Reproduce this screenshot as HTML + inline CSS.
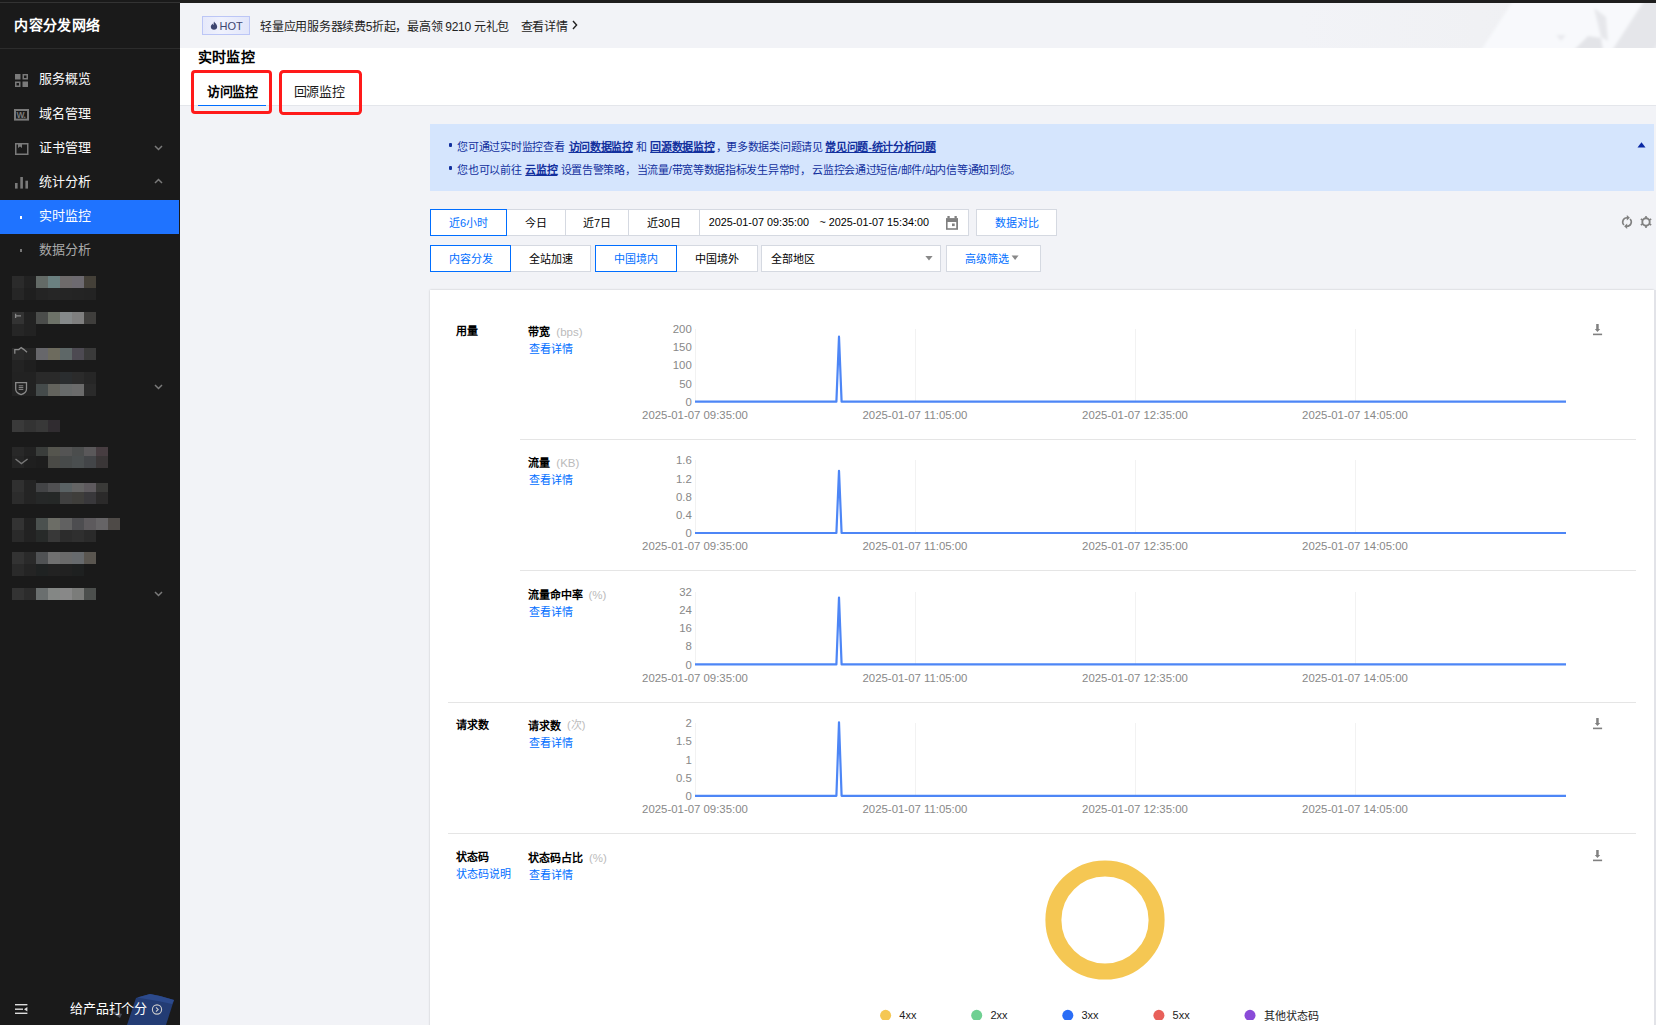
<!DOCTYPE html>
<html lang="zh-CN"><head><meta charset="utf-8"><style>
html,body{margin:0;padding:0;}
body{width:1656px;height:1025px;position:relative;overflow:hidden;font-family:"Liberation Sans",sans-serif;}
.t{position:absolute;line-height:30px;white-space:nowrap;}
.b{position:absolute;}
</style></head><body>
<div class="b" style="left:0px;top:0px;width:1656px;height:1025px;background:#f2f3f7"></div>
<div class="b" style="left:0px;top:0px;width:180px;height:1025px;background:#1a1a1a"></div>
<div class="b" style="left:0px;top:2px;width:180px;height:1px;background:#333"></div>
<div class="t" style="left:14.3px;top:10.1px;font-size:14px;color:#fff;font-weight:700;letter-spacing:0.4px;">内容分发网络</div>
<div class="b" style="left:0px;top:48px;width:180px;height:1px;background:#2c2c2c"></div>
<div class="t" style="left:39.0px;top:64.3px;font-size:13px;color:#fafafa;font-weight:500;">服务概览</div>
<div class="t" style="left:39.0px;top:99.3px;font-size:13px;color:#fafafa;font-weight:500;">域名管理</div>
<div class="t" style="left:39.0px;top:133.0px;font-size:13px;color:#fafafa;font-weight:500;">证书管理</div>
<div class="t" style="left:39.0px;top:167.3px;font-size:13px;color:#fafafa;font-weight:500;">统计分析</div>
<div class="b" style="left:0px;top:200px;width:179px;height:34px;background:#1f73ff"></div>
<div class="t" style="left:39.0px;top:201.0px;font-size:13px;color:#fff;font-weight:500;">实时监控</div>
<div class="t" style="left:39.0px;top:235.0px;font-size:13px;color:#aaa;font-weight:500;">数据分析</div>
<div class="b" style="left:20px;top:216px;width:2px;height:3px;background:#fff"></div>
<div class="b" style="left:20px;top:249px;width:2px;height:3px;background:#777"></div>
<svg class="b" style="left:0;top:0" width="180" height="1025" viewBox="0 0 180 1025">
<g fill="#7a7a7a">
 <rect x="15" y="74" width="5.5" height="5.5"/>
 <rect x="22.5" y="81.5" width="5.5" height="5.5"/>
</g>
<g fill="none" stroke="#7a7a7a" stroke-width="1.5">
 <rect x="23.25" y="74.75" width="4" height="4"/>
 <rect x="15.75" y="82.25" width="4" height="4"/>
 <rect x="15.75" y="143.75" width="12" height="10.5"/>
 <path d="M155 146 L158.5 149.5 L162 146"/>
 <path d="M155 183 L158.5 179.5 L162 183"/>
 <path d="M155 385 L158.5 388.5 L162 385"/>
 <path d="M155 592 L158.5 595.5 L162 592"/>
</g>
<path d="M18 144 L18 148 L20 146.5 L22 148 L22 144" fill="#7a7a7a"/>
<rect x="15" y="110" width="13" height="9.6" fill="none" stroke="#7a7a7a" stroke-width="2"/><text x="16.6" y="118.4" font-family="Liberation Sans" font-size="8.5" font-weight="bold" fill="#7a7a7a" letter-spacing="-0.6">W.</text>
<g fill="#7a7a7a">
 <rect x="15" y="183" width="2.6" height="5.6"/>
 <rect x="20.3" y="177" width="2.6" height="11.6"/>
 <rect x="25.4" y="180.7" width="2.6" height="7.9"/>
</g>
</svg>
<div class="b" style="left:12px;top:276px;width:12px;height:12px;background:#2b2b2b"></div>
<div class="b" style="left:24px;top:276px;width:12px;height:12px;background:#222"></div>
<div class="b" style="left:36px;top:276px;width:12px;height:12px;background:#636a66"></div>
<div class="b" style="left:48px;top:276px;width:12px;height:12px;background:#6b8080"></div>
<div class="b" style="left:60px;top:276px;width:12px;height:12px;background:#6e6b6b"></div>
<div class="b" style="left:72px;top:276px;width:12px;height:12px;background:#6d6a70"></div>
<div class="b" style="left:84px;top:276px;width:12px;height:12px;background:#444038"></div>
<div class="b" style="left:12px;top:288px;width:12px;height:12px;background:#262626"></div>
<div class="b" style="left:24px;top:288px;width:12px;height:12px;background:#1f1f1f"></div>
<div class="b" style="left:36px;top:288px;width:12px;height:12px;background:#242424"></div>
<div class="b" style="left:48px;top:288px;width:12px;height:12px;background:#262626"></div>
<div class="b" style="left:60px;top:288px;width:12px;height:12px;background:#252525"></div>
<div class="b" style="left:72px;top:288px;width:12px;height:12px;background:#242424"></div>
<div class="b" style="left:84px;top:288px;width:12px;height:12px;background:#232323"></div>
<div class="b" style="left:12px;top:312px;width:12px;height:12px;background:#333"></div>
<div class="b" style="left:24px;top:312px;width:12px;height:12px;background:#222"></div>
<div class="b" style="left:36px;top:312px;width:12px;height:12px;background:#4b4d4b"></div>
<div class="b" style="left:48px;top:312px;width:12px;height:12px;background:#6d7268"></div>
<div class="b" style="left:60px;top:312px;width:12px;height:12px;background:#85898a"></div>
<div class="b" style="left:72px;top:312px;width:12px;height:12px;background:#7f7f7f"></div>
<div class="b" style="left:84px;top:312px;width:12px;height:12px;background:#3f3e3c"></div>
<div class="b" style="left:12px;top:324px;width:12px;height:12px;background:#262626"></div>
<div class="b" style="left:24px;top:324px;width:12px;height:12px;background:#222"></div>
<div class="b" style="left:12px;top:348px;width:12px;height:12px;background:#2a2a2a"></div>
<div class="b" style="left:24px;top:348px;width:12px;height:12px;background:#262626"></div>
<div class="b" style="left:36px;top:348px;width:12px;height:12px;background:#67676b"></div>
<div class="b" style="left:48px;top:348px;width:12px;height:12px;background:#6d6b5e"></div>
<div class="b" style="left:60px;top:348px;width:12px;height:12px;background:#5e6767"></div>
<div class="b" style="left:72px;top:348px;width:12px;height:12px;background:#4d4a52"></div>
<div class="b" style="left:84px;top:348px;width:12px;height:12px;background:#3a3a3a"></div>
<div class="b" style="left:12px;top:360px;width:12px;height:12px;background:#232323"></div>
<div class="b" style="left:24px;top:360px;width:12px;height:12px;background:#1f1f1f"></div>
<div class="b" style="left:12px;top:372px;width:12px;height:12px;background:#222"></div>
<div class="b" style="left:24px;top:372px;width:12px;height:12px;background:#222"></div>
<div class="b" style="left:36px;top:372px;width:12px;height:12px;background:#2a2a2a"></div>
<div class="b" style="left:48px;top:372px;width:12px;height:12px;background:#2a2a2a"></div>
<div class="b" style="left:60px;top:372px;width:12px;height:12px;background:#2a2d2f"></div>
<div class="b" style="left:72px;top:372px;width:12px;height:12px;background:#2b2b2b"></div>
<div class="b" style="left:84px;top:372px;width:12px;height:12px;background:#262626"></div>
<div class="b" style="left:12px;top:384px;width:12px;height:12px;background:#222"></div>
<div class="b" style="left:24px;top:384px;width:12px;height:12px;background:#222"></div>
<div class="b" style="left:36px;top:384px;width:12px;height:12px;background:#454b4b"></div>
<div class="b" style="left:48px;top:384px;width:12px;height:12px;background:#63635d"></div>
<div class="b" style="left:60px;top:384px;width:12px;height:12px;background:#676a6a"></div>
<div class="b" style="left:72px;top:384px;width:12px;height:12px;background:#6b6b6b"></div>
<div class="b" style="left:84px;top:384px;width:12px;height:12px;background:#2a2a2a"></div>
<div class="b" style="left:12px;top:420px;width:12px;height:12px;background:#3a3a3a"></div>
<div class="b" style="left:24px;top:420px;width:12px;height:12px;background:#333"></div>
<div class="b" style="left:36px;top:420px;width:12px;height:12px;background:#383838"></div>
<div class="b" style="left:48px;top:420px;width:12px;height:12px;background:#302c30"></div>
<div class="b" style="left:12px;top:447px;width:12px;height:9px;background:#282828"></div>
<div class="b" style="left:24px;top:447px;width:12px;height:9px;background:#222"></div>
<div class="b" style="left:36px;top:447px;width:12px;height:9px;background:#3a3d3b"></div>
<div class="b" style="left:48px;top:447px;width:12px;height:9px;background:#55554e"></div>
<div class="b" style="left:60px;top:447px;width:12px;height:9px;background:#545454"></div>
<div class="b" style="left:72px;top:447px;width:12px;height:9px;background:#4b4d4d"></div>
<div class="b" style="left:84px;top:447px;width:12px;height:9px;background:#5a585a"></div>
<div class="b" style="left:96px;top:447px;width:12px;height:9px;background:#473d41"></div>
<div class="b" style="left:12px;top:456px;width:12px;height:12px;background:#252525"></div>
<div class="b" style="left:24px;top:456px;width:12px;height:12px;background:#1f1f1f"></div>
<div class="b" style="left:36px;top:456px;width:12px;height:12px;background:#1d1d1d"></div>
<div class="b" style="left:48px;top:456px;width:12px;height:12px;background:#4a4a46"></div>
<div class="b" style="left:60px;top:456px;width:12px;height:12px;background:#474a4a"></div>
<div class="b" style="left:72px;top:456px;width:12px;height:12px;background:#4a4e4f"></div>
<div class="b" style="left:84px;top:456px;width:12px;height:12px;background:#434548"></div>
<div class="b" style="left:96px;top:456px;width:12px;height:12px;background:#3a3637"></div>
<div class="b" style="left:12px;top:480px;width:12px;height:12px;background:#303030"></div>
<div class="b" style="left:24px;top:480px;width:12px;height:12px;background:#242424"></div>
<div class="b" style="left:12px;top:492px;width:12px;height:12px;background:#2c2c2c"></div>
<div class="b" style="left:24px;top:492px;width:12px;height:12px;background:#242424"></div>
<div class="b" style="left:36px;top:483px;width:12px;height:9px;background:#434446"></div>
<div class="b" style="left:48px;top:483px;width:12px;height:9px;background:#505052"></div>
<div class="b" style="left:60px;top:483px;width:12px;height:9px;background:#5a6264"></div>
<div class="b" style="left:72px;top:483px;width:12px;height:9px;background:#646464"></div>
<div class="b" style="left:84px;top:483px;width:12px;height:9px;background:#5e5a5e"></div>
<div class="b" style="left:96px;top:483px;width:12px;height:9px;background:#3a3a38"></div>
<div class="b" style="left:36px;top:492px;width:12px;height:12px;background:#262828"></div>
<div class="b" style="left:48px;top:492px;width:12px;height:12px;background:#252827"></div>
<div class="b" style="left:60px;top:492px;width:12px;height:12px;background:#404040"></div>
<div class="b" style="left:72px;top:492px;width:12px;height:12px;background:#3f3e3b"></div>
<div class="b" style="left:84px;top:492px;width:12px;height:12px;background:#39383b"></div>
<div class="b" style="left:96px;top:492px;width:12px;height:12px;background:#2b2a2a"></div>
<svg class="b" style="left:10px;top:455px" width="22" height="14" viewBox="10 455 22 14"><path d="M15.5 459 L21.4 463.6 L27.6 459" fill="none" stroke="#777" stroke-width="1.4"/></svg>
<div class="b" style="left:12px;top:518px;width:12px;height:12px;background:#333"></div>
<div class="b" style="left:24px;top:518px;width:12px;height:12px;background:#222"></div>
<div class="b" style="left:36px;top:518px;width:12px;height:12px;background:#4b514f"></div>
<div class="b" style="left:48px;top:518px;width:12px;height:12px;background:#6c6d66"></div>
<div class="b" style="left:60px;top:518px;width:12px;height:12px;background:#616161"></div>
<div class="b" style="left:72px;top:518px;width:12px;height:12px;background:#4d4d50"></div>
<div class="b" style="left:84px;top:518px;width:12px;height:12px;background:#5d5a5d"></div>
<div class="b" style="left:96px;top:518px;width:12px;height:12px;background:#666466"></div>
<div class="b" style="left:108px;top:518px;width:12px;height:12px;background:#4e4a47"></div>
<div class="b" style="left:12px;top:530px;width:12px;height:12px;background:#2a2a2a"></div>
<div class="b" style="left:24px;top:530px;width:12px;height:12px;background:#222"></div>
<div class="b" style="left:36px;top:530px;width:12px;height:12px;background:#272a29"></div>
<div class="b" style="left:48px;top:530px;width:12px;height:12px;background:#383838"></div>
<div class="b" style="left:60px;top:530px;width:12px;height:12px;background:#2c2c2c"></div>
<div class="b" style="left:72px;top:530px;width:12px;height:12px;background:#2f2f2f"></div>
<div class="b" style="left:84px;top:530px;width:12px;height:12px;background:#2a2a2a"></div>
<div class="b" style="left:12px;top:552px;width:12px;height:12px;background:#333"></div>
<div class="b" style="left:24px;top:552px;width:12px;height:12px;background:#2a2a2a"></div>
<div class="b" style="left:36px;top:552px;width:12px;height:12px;background:#505254"></div>
<div class="b" style="left:48px;top:552px;width:12px;height:12px;background:#707070"></div>
<div class="b" style="left:60px;top:552px;width:12px;height:12px;background:#6a6a6a"></div>
<div class="b" style="left:72px;top:552px;width:12px;height:12px;background:#676a6d"></div>
<div class="b" style="left:84px;top:552px;width:12px;height:12px;background:#5a5650"></div>
<div class="b" style="left:12px;top:564px;width:12px;height:12px;background:#2a2a2a"></div>
<div class="b" style="left:24px;top:564px;width:12px;height:12px;background:#242424"></div>
<div class="b" style="left:36px;top:564px;width:12px;height:12px;background:#1f2222"></div>
<div class="b" style="left:48px;top:564px;width:12px;height:12px;background:#222"></div>
<div class="b" style="left:60px;top:564px;width:12px;height:12px;background:#212121"></div>
<div class="b" style="left:72px;top:564px;width:12px;height:12px;background:#1e2020"></div>
<div class="b" style="left:12px;top:588px;width:12px;height:12px;background:#333"></div>
<div class="b" style="left:24px;top:588px;width:12px;height:12px;background:#2c2c2c"></div>
<div class="b" style="left:36px;top:588px;width:12px;height:12px;background:#6a6f6f"></div>
<div class="b" style="left:48px;top:588px;width:12px;height:12px;background:#848785"></div>
<div class="b" style="left:60px;top:588px;width:12px;height:12px;background:#888888"></div>
<div class="b" style="left:72px;top:588px;width:12px;height:12px;background:#7b7c7a"></div>
<div class="b" style="left:84px;top:588px;width:12px;height:12px;background:#4c4f4d"></div>
<svg class="b" style="left:0;top:300px" width="40" height="100" viewBox="0 300 40 100">
<g fill="none" stroke="#8a8a8a" stroke-width="1.3">
<path d="M15.6 313.8 L15.6 318 M15.6 315.9 L21 315.9"/>
<path d="M14.8 353.8 L14.8 349.6 L18.8 349.6 L21.2 347.6 L24 349.6 L27 352.2"/>
<path d="M15.7 382.6 L26.5 382.6 L26.5 389 Q26.5 393 21.1 394.6 Q15.7 393 15.7 389 Z"/>
<path d="M18.7 385.8 L23.3 385.8 M18.7 387.6 L23.3 387.6 M18.7 389.4 L23.3 389.4" stroke-width="1"/>
</g>
</svg>
<svg class="b" style="left:0;top:985px" width="180" height="40" viewBox="0 985 180 40">
<path d="M127 1025 L136 998 L150 994 L160 996 L174 1000 L166 1025 Z" fill="#233c74"/>
<path d="M137 997.5 L150 994 L160 996 L174 1000 L172 1004 L158 1001 Z" fill="#2c4a8c"/>
<path d="M108 1010 L122 1014 L120 1018 Z" fill="#4a4f5a"/>
<g fill="#ddd">
 <rect x="15" y="1004" width="12.4" height="1.4"/>
 <rect x="15" y="1008.5" width="8" height="1.4"/>
 <rect x="15" y="1012.6" width="12.4" height="1.4"/>
 <path d="M24 1009.2 L27.4 1007 L27.4 1011.4 Z"/>
</g>
<circle cx="157" cy="1009.5" r="4.6" fill="none" stroke="#ccc" stroke-width="1.1"/>
<path d="M156 1007.3 L158.2 1009.5 L156 1011.7" fill="none" stroke="#ccc" stroke-width="1.1"/>
</svg>
<div class="t" style="left:70.4px;top:994.0px;font-size:13px;color:#fff;font-weight:500;letter-spacing:-0.25px;">给产品打个分</div>
<div class="b" style="left:180px;top:0px;width:1476px;height:3px;background:#1e1e1e"></div>
<div class="b" style="left:0px;top:0px;width:180px;height:2px;background:#1a1a1a"></div>
<svg class="b" style="left:1300px;top:3px" width="356" height="45" viewBox="1300 3 356 45">
<defs><linearGradient id="bg1" x1="0" x2="1"><stop offset="0" stop-color="#f2f3f7"/><stop offset="0.5" stop-color="#f0f1f4"/><stop offset="1" stop-color="#eeeff3"/></linearGradient>
<filter id="bl" x="-10%" y="-50%" width="120%" height="200%"><feGaussianBlur stdDeviation="1.6"/></filter>
<clipPath id="bc"><rect x="1300" y="3" width="356" height="45"/></clipPath></defs>
<rect x="1300" y="3" width="356" height="45" fill="url(#bg1)"/>
<g clip-path="url(#bc)"><g filter="url(#bl)">
<path d="M1480 52 L1515 -2 L1660 -2 L1660 52 Z" fill="#f8f9fc"/>
<path d="M1611 52 L1646 -2 L1660 -2 L1660 52 Z" fill="#e5e6ea"/>
<path d="M1652 52 L1660 40 L1660 52 Z" fill="#eeeff2"/>
<path d="M1574 50 L1588 36 L1601 38 L1603 50 Z" fill="#e3e4e8"/>
<path d="M1594 8 L1606 17 L1608 41 L1601 37 Z" fill="#e6e7eb"/>
<path d="M1556 35 L1566 35 L1561 41 Z" fill="#e9eaee"/>
</g></g>
</svg>
<div class="b" style="left:202px;top:16px;width:46px;height:17px;border:1px solid #bcc6f6;background:linear-gradient(90deg,#e6e9fb,#f0f2fd 40%,#e2e6fa)"></div>
<svg class="b" style="left:209.7px;top:20px" width="8" height="11" viewBox="0 0 8 11"><path d="M4 1.5 C5 3 7.2 4.5 7.2 6.8 C7.2 8.6 5.8 9.8 4 9.8 C2.2 9.8 0.8 8.6 0.8 6.8 C0.8 5.2 2 4.6 2.6 3.6 C2.8 4.6 3.2 5 3.6 5 C3.6 3.8 3.6 2.6 4 1.5 Z" fill="#3e4670"/></svg>
<div class="t" style="left:219.5px;top:10.5px;font-size:11px;color:#3e4670;font-weight:500;">HOT</div>
<div class="t" style="left:260.4px;top:11.9px;font-size:12px;color:#222;font-weight:500;letter-spacing:-0.3px;">轻量应用服务器续费5折起，最高领 9210 元礼包</div>
<div class="t" style="left:520.7px;top:11.9px;font-size:12px;color:#222;font-weight:500;letter-spacing:-0.3px;">查看详情</div>
<svg class="b" style="left:570px;top:19px" width="10" height="12" viewBox="0 0 10 12"><path d="M3 2 L6.6 6 L3 10" fill="none" stroke="#222" stroke-width="1.4"/></svg>
<div class="b" style="left:180px;top:48px;width:1476px;height:57px;background:#fff"></div>
<div class="b" style="left:180px;top:105px;width:1476px;height:1px;background:#e4e6eb"></div>
<div class="t" style="left:197.9px;top:41.5px;font-size:14px;color:#000;font-weight:700;letter-spacing:0.3px;">实时监控</div>
<div class="t" style="left:207.1px;top:77.0px;font-size:13px;color:#000;font-weight:700;letter-spacing:-0.4px;">访问监控</div>
<div class="b" style="left:198px;top:104.6px;width:68px;height:1.6px;background:#006eff"></div>
<div class="t" style="left:293.7px;top:77.0px;font-size:13px;color:#1a1a1a;font-weight:500;letter-spacing:-0.2px;">回源监控</div>
<div class="b" style="left:191.4px;top:70.2px;width:74.7px;height:37.6px;border:3.2px solid #ff1a1a;border-radius:4px"></div>
<div class="b" style="left:278.6px;top:69.5px;width:77.5px;height:39.5px;border:3.2px solid #ff1a1a;border-radius:4.5px"></div>
<div class="b" style="left:430px;top:124px;width:1224px;height:67px;background:#d5e5fd"></div>
<div class="b" style="left:449px;top:143px;width:3px;height:4px;background:#12309e;border-radius:1px"></div>
<div class="b" style="left:449px;top:166px;width:3px;height:4px;background:#12309e;border-radius:1px"></div>
<div class="t" style="left:457.4px;top:131.8px;font-size:11px;color:#12309e;font-weight:500;letter-spacing:-0.3px;">您可通过实时监控查看</div>
<div class="t" style="left:568.5px;top:131.8px;font-size:11px;color:#12309e;font-weight:500;letter-spacing:-0.3px;text-decoration:underline;font-weight:700;">访问数据监控</div>
<div class="t" style="left:636.3px;top:131.8px;font-size:11px;color:#12309e;font-weight:500;letter-spacing:-0.3px;">和</div>
<div class="t" style="left:650.2px;top:131.8px;font-size:11px;color:#12309e;font-weight:500;letter-spacing:-0.3px;text-decoration:underline;font-weight:700;">回源数据监控</div>
<div class="t" style="left:715.7px;top:131.8px;font-size:11px;color:#12309e;font-weight:500;letter-spacing:-0.3px;">，更多数据类问题请见</div>
<div class="t" style="left:825.4px;top:131.8px;font-size:11px;color:#12309e;font-weight:500;letter-spacing:-0.3px;text-decoration:underline;font-weight:700;">常见问题-统计分析问题</div>
<div class="t" style="left:457.4px;top:154.8px;font-size:11px;color:#12309e;font-weight:500;letter-spacing:-0.3px;">您也可以前往</div>
<div class="t" style="left:525.3px;top:154.8px;font-size:11px;color:#12309e;font-weight:500;letter-spacing:-0.3px;text-decoration:underline;font-weight:700;">云监控</div>
<div class="t" style="left:560.7px;top:154.8px;font-size:11px;color:#12309e;font-weight:500;letter-spacing:-0.3px;">设置告警策略，</div>
<div class="t" style="left:636.7px;top:154.8px;font-size:11px;color:#12309e;font-weight:500;letter-spacing:-0.3px;">当流量/带宽等数据指标发生异常时，</div>
<div class="t" style="left:812.2px;top:154.8px;font-size:11px;color:#12309e;font-weight:500;letter-spacing:-0.3px;">云监控会通过短信/邮件/站内信等通知到您。</div>
<svg class="b" style="left:1634.5px;top:139.3px" width="12" height="10" viewBox="0 0 12 10"><path d="M2.5 8.4 L6.5 3.3 L10.5 8.4 Z" fill="#0a28a4"/></svg>
<div class="b" style="left:506px;top:209px;width:60px;height:27px;box-sizing:border-box;border:1px solid #d5d9e1;background:#fff;"></div>
<div class="t" style="left:506.0px;top:207.8px;width:60px;text-align:center;font-size:11px;color:#000;font-weight:500;">今日</div>
<div class="b" style="left:565px;top:209px;width:64px;height:27px;box-sizing:border-box;border:1px solid #d5d9e1;background:#fff;"></div>
<div class="t" style="left:565.0px;top:207.8px;width:64px;text-align:center;font-size:11px;color:#000;font-weight:500;">近7日</div>
<div class="b" style="left:628px;top:209px;width:72px;height:27px;box-sizing:border-box;border:1px solid #d5d9e1;background:#fff;"></div>
<div class="t" style="left:628.0px;top:207.8px;width:72px;text-align:center;font-size:11px;color:#000;font-weight:500;">近30日</div>
<div class="b" style="left:699px;top:209px;width:270px;height:27px;box-sizing:border-box;border:1px solid #d5d9e1;background:#fff;"></div>
<div class="b" style="left:430px;top:209px;width:77px;height:27px;box-sizing:border-box;border:1px solid #006eff;background:#fff;z-index:2;"></div>
<div class="t" style="left:430.0px;top:207.8px;width:77px;text-align:center;font-size:11px;color:#006eff;font-weight:500;z-index:2;">近6小时</div>
<div class="t" style="left:708.7px;top:207.0px;font-size:10.8px;color:#000;font-weight:500;">2025-01-07 09:35:00</div>
<div class="t" style="left:819.5px;top:207.0px;font-size:10.8px;color:#000;font-weight:500;">~ 2025-01-07 15:34:00</div>
<svg class="b" style="left:940px;top:210px" width="24" height="24" viewBox="940 210 24 24"><rect x="946" y="218.1" width="12" height="11.7" fill="#808080"/><rect x="947.6" y="222" width="8.6" height="6.2" fill="#fff"/><rect x="952" y="223.5" width="2.7" height="2.6" fill="#808080"/><rect x="947.4" y="216" width="2.3" height="2.5" fill="#808080"/><rect x="954.5" y="216" width="2.3" height="2.5" fill="#808080"/></svg>
<div class="b" style="left:976px;top:209px;width:81px;height:27px;box-sizing:border-box;border:1px solid #d5d9e1;background:#fff;"></div>
<div class="t" style="left:976.0px;top:207.8px;width:81px;text-align:center;font-size:11px;color:#006eff;font-weight:500;">数据对比</div>
<div class="b" style="left:510px;top:245px;width:81px;height:27px;box-sizing:border-box;border:1px solid #d5d9e1;background:#fff;"></div>
<div class="t" style="left:510.0px;top:243.8px;width:81px;text-align:center;font-size:11px;color:#000;font-weight:500;">全站加速</div>
<div class="b" style="left:430px;top:245px;width:81px;height:27px;box-sizing:border-box;border:1px solid #006eff;background:#fff;z-index:2;"></div>
<div class="t" style="left:430.0px;top:243.8px;width:81px;text-align:center;font-size:11px;color:#006eff;font-weight:500;z-index:2;">内容分发</div>
<div class="b" style="left:676px;top:245px;width:82px;height:27px;box-sizing:border-box;border:1px solid #d5d9e1;background:#fff;"></div>
<div class="t" style="left:676.0px;top:243.8px;width:82px;text-align:center;font-size:11px;color:#000;font-weight:500;">中国境外</div>
<div class="b" style="left:595px;top:245px;width:82px;height:27px;box-sizing:border-box;border:1px solid #006eff;background:#fff;z-index:2;"></div>
<div class="t" style="left:595.0px;top:243.8px;width:82px;text-align:center;font-size:11px;color:#006eff;font-weight:500;z-index:2;">中国境内</div>
<div class="b" style="left:761px;top:245px;width:180px;height:27px;box-sizing:border-box;border:1px solid #d5d9e1;background:#fff;"></div>
<div class="t" style="left:771.1px;top:243.8px;font-size:11px;color:#000;font-weight:500;">全部地区</div>
<svg class="b" style="left:922px;top:253px" width="14" height="10" viewBox="0 0 14 10"><path d="M3.4 3 L10.6 3 L7 7.4 Z" fill="#888"/></svg>
<div class="b" style="left:946px;top:245px;width:95px;height:27px;box-sizing:border-box;border:1px solid #d5d9e1;background:#fff;"></div>
<div class="t" style="left:964.7px;top:243.8px;font-size:11px;color:#006eff;font-weight:500;">高级筛选</div>
<svg class="b" style="left:1008px;top:253px" width="14" height="10" viewBox="0 0 14 10"><path d="M3.6 2.6 L10.6 2.6 L7.1 7 Z" fill="#888"/></svg>
<svg class="b" style="left:1616px;top:211px" width="40" height="22" viewBox="1616 211 40 22">
<g fill="none" stroke="#808080" stroke-width="1.6">
<path d="M1623.96 225.04 A4.3 4.3 0 0 1 1627 217.7"/>
<path d="M1630.04 218.96 A4.3 4.3 0 0 1 1627 226.3"/>
</g>
<path d="M1626.8 215 L1629.9 217.7 L1626.8 220.4 Z" fill="#808080"/>
<path d="M1627.2 223.6 L1624.1 226.3 L1627.2 229 Z" fill="#808080"/>
<circle cx="1646" cy="222" r="3.7" fill="none" stroke="#808080" stroke-width="1.9"/>
<g stroke="#808080" stroke-width="1.6">
<path d="M1646 216 L1646 218.2 M1646 225.8 L1646 228 M1640.8 219 L1642.7 220.1 M1649.3 223.9 L1651.2 225 M1640.8 225 L1642.7 223.9 M1649.3 220.1 L1651.2 219"/>
</g>
</svg>
<div class="b" style="left:430px;top:290px;width:1224px;height:740px;background:#fff;box-shadow:0 0 2px rgba(0,0,0,0.2)"></div>
<div class="b" style="left:1654px;top:290px;width:2px;height:735px;background:#e2e3e8"></div>
<div class="b" style="left:695px;top:329px;width:1px;height:72px;background:#f2f2f2"></div>
<div class="b" style="left:915px;top:329px;width:1px;height:72px;background:#f2f2f2"></div>
<div class="b" style="left:1135px;top:329px;width:1px;height:72px;background:#f2f2f2"></div>
<div class="b" style="left:1355px;top:329px;width:1px;height:72px;background:#f2f2f2"></div>
<div class="t" style="left:591.8px;top:386.8px;width:100px;text-align:right;font-size:11.4px;color:#888888;">0</div>
<div class="t" style="left:591.8px;top:368.6px;width:100px;text-align:right;font-size:11.4px;color:#888888;">50</div>
<div class="t" style="left:591.8px;top:350.4px;width:100px;text-align:right;font-size:11.4px;color:#888888;">100</div>
<div class="t" style="left:591.8px;top:332.2px;width:100px;text-align:right;font-size:11.4px;color:#888888;">150</div>
<div class="t" style="left:591.8px;top:314.0px;width:100px;text-align:right;font-size:11.4px;color:#888888;">200</div>
<div class="t" style="left:595.0px;top:400.0px;width:200px;text-align:center;font-size:11.4px;color:#888888;font-weight:500;">2025-01-07 09:35:00</div>
<div class="t" style="left:815.0px;top:400.0px;width:200px;text-align:center;font-size:11.4px;color:#888888;font-weight:500;">2025-01-07 11:05:00</div>
<div class="t" style="left:1035.0px;top:400.0px;width:200px;text-align:center;font-size:11.4px;color:#888888;font-weight:500;">2025-01-07 12:35:00</div>
<div class="t" style="left:1255.0px;top:400.0px;width:200px;text-align:center;font-size:11.4px;color:#888888;font-weight:500;">2025-01-07 14:05:00</div>
<svg class="b" style="left:690px;top:321px" width="890" height="90" viewBox="690 321 890 90"><path d="M695 401.6 L836.4 401.6 L839 336.7 L841.6 401.6 L1566 401.6" fill="none" stroke="#4d86f6" stroke-width="2.2" stroke-linejoin="round"/></svg>
<div class="t" style="left:528.3px;top:316.8px;font-size:11px;color:#000;font-weight:700;">带宽</div>
<div class="t" style="left:528.5px;top:333.8px;font-size:11px;color:#006eff;font-weight:500;">查看详情</div>
<div class="t" style="left:556.3px;top:316.5px;font-size:11.5px;color:#bbb;font-weight:500;">(bps)</div>
<div class="b" style="left:695px;top:460px;width:1px;height:72px;background:#f2f2f2"></div>
<div class="b" style="left:915px;top:460px;width:1px;height:72px;background:#f2f2f2"></div>
<div class="b" style="left:1135px;top:460px;width:1px;height:72px;background:#f2f2f2"></div>
<div class="b" style="left:1355px;top:460px;width:1px;height:72px;background:#f2f2f2"></div>
<div class="t" style="left:591.8px;top:518.2px;width:100px;text-align:right;font-size:11.4px;color:#888888;">0</div>
<div class="t" style="left:591.8px;top:500.0px;width:100px;text-align:right;font-size:11.4px;color:#888888;">0.4</div>
<div class="t" style="left:591.8px;top:481.8px;width:100px;text-align:right;font-size:11.4px;color:#888888;">0.8</div>
<div class="t" style="left:591.8px;top:463.6px;width:100px;text-align:right;font-size:11.4px;color:#888888;">1.2</div>
<div class="t" style="left:591.8px;top:445.4px;width:100px;text-align:right;font-size:11.4px;color:#888888;">1.6</div>
<div class="t" style="left:595.0px;top:531.4px;width:200px;text-align:center;font-size:11.4px;color:#888888;font-weight:500;">2025-01-07 09:35:00</div>
<div class="t" style="left:815.0px;top:531.4px;width:200px;text-align:center;font-size:11.4px;color:#888888;font-weight:500;">2025-01-07 11:05:00</div>
<div class="t" style="left:1035.0px;top:531.4px;width:200px;text-align:center;font-size:11.4px;color:#888888;font-weight:500;">2025-01-07 12:35:00</div>
<div class="t" style="left:1255.0px;top:531.4px;width:200px;text-align:center;font-size:11.4px;color:#888888;font-weight:500;">2025-01-07 14:05:00</div>
<svg class="b" style="left:690px;top:452px" width="890" height="90" viewBox="690 452 890 90"><path d="M695 533.0 L836.4 533.0 L839 470.9 L841.6 533.0 L1566 533.0" fill="none" stroke="#4d86f6" stroke-width="2.2" stroke-linejoin="round"/></svg>
<div class="t" style="left:528.3px;top:448.2px;font-size:11px;color:#000;font-weight:700;">流量</div>
<div class="t" style="left:528.5px;top:465.4px;font-size:11px;color:#006eff;font-weight:500;">查看详情</div>
<div class="t" style="left:556.3px;top:447.9px;font-size:11.5px;color:#bbb;font-weight:500;">(KB)</div>
<div class="b" style="left:695px;top:592px;width:1px;height:72px;background:#f2f2f2"></div>
<div class="b" style="left:915px;top:592px;width:1px;height:72px;background:#f2f2f2"></div>
<div class="b" style="left:1135px;top:592px;width:1px;height:72px;background:#f2f2f2"></div>
<div class="b" style="left:1355px;top:592px;width:1px;height:72px;background:#f2f2f2"></div>
<div class="t" style="left:591.8px;top:649.6px;width:100px;text-align:right;font-size:11.4px;color:#888888;">0</div>
<div class="t" style="left:591.8px;top:631.4px;width:100px;text-align:right;font-size:11.4px;color:#888888;">8</div>
<div class="t" style="left:591.8px;top:613.2px;width:100px;text-align:right;font-size:11.4px;color:#888888;">16</div>
<div class="t" style="left:591.8px;top:595.0px;width:100px;text-align:right;font-size:11.4px;color:#888888;">24</div>
<div class="t" style="left:591.8px;top:576.8px;width:100px;text-align:right;font-size:11.4px;color:#888888;">32</div>
<div class="t" style="left:595.0px;top:662.8px;width:200px;text-align:center;font-size:11.4px;color:#888888;font-weight:500;">2025-01-07 09:35:00</div>
<div class="t" style="left:815.0px;top:662.8px;width:200px;text-align:center;font-size:11.4px;color:#888888;font-weight:500;">2025-01-07 11:05:00</div>
<div class="t" style="left:1035.0px;top:662.8px;width:200px;text-align:center;font-size:11.4px;color:#888888;font-weight:500;">2025-01-07 12:35:00</div>
<div class="t" style="left:1255.0px;top:662.8px;width:200px;text-align:center;font-size:11.4px;color:#888888;font-weight:500;">2025-01-07 14:05:00</div>
<svg class="b" style="left:690px;top:584px" width="890" height="90" viewBox="690 584 890 90"><path d="M695 664.4 L836.4 664.4 L839 597.5 L841.6 664.4 L1566 664.4" fill="none" stroke="#4d86f6" stroke-width="2.2" stroke-linejoin="round"/></svg>
<div class="t" style="left:528.3px;top:580.3px;font-size:11px;color:#000;font-weight:700;">流量命中率</div>
<div class="t" style="left:528.5px;top:597.2px;font-size:11px;color:#006eff;font-weight:500;">查看详情</div>
<div class="t" style="left:588.5px;top:580.0px;font-size:11.5px;color:#bbb;font-weight:500;">(%)</div>
<div class="b" style="left:695px;top:723px;width:1px;height:72px;background:#f2f2f2"></div>
<div class="b" style="left:915px;top:723px;width:1px;height:72px;background:#f2f2f2"></div>
<div class="b" style="left:1135px;top:723px;width:1px;height:72px;background:#f2f2f2"></div>
<div class="b" style="left:1355px;top:723px;width:1px;height:72px;background:#f2f2f2"></div>
<div class="t" style="left:591.8px;top:781.0px;width:100px;text-align:right;font-size:11.4px;color:#888888;">0</div>
<div class="t" style="left:591.8px;top:762.8px;width:100px;text-align:right;font-size:11.4px;color:#888888;">0.5</div>
<div class="t" style="left:591.8px;top:744.6px;width:100px;text-align:right;font-size:11.4px;color:#888888;">1</div>
<div class="t" style="left:591.8px;top:726.4px;width:100px;text-align:right;font-size:11.4px;color:#888888;">1.5</div>
<div class="t" style="left:591.8px;top:708.2px;width:100px;text-align:right;font-size:11.4px;color:#888888;">2</div>
<div class="t" style="left:595.0px;top:794.2px;width:200px;text-align:center;font-size:11.4px;color:#888888;font-weight:500;">2025-01-07 09:35:00</div>
<div class="t" style="left:815.0px;top:794.2px;width:200px;text-align:center;font-size:11.4px;color:#888888;font-weight:500;">2025-01-07 11:05:00</div>
<div class="t" style="left:1035.0px;top:794.2px;width:200px;text-align:center;font-size:11.4px;color:#888888;font-weight:500;">2025-01-07 12:35:00</div>
<div class="t" style="left:1255.0px;top:794.2px;width:200px;text-align:center;font-size:11.4px;color:#888888;font-weight:500;">2025-01-07 14:05:00</div>
<svg class="b" style="left:690px;top:715px" width="890" height="90" viewBox="690 715 890 90"><path d="M695 795.8 L836.4 795.8 L839 722.3 L841.6 795.8 L1566 795.8" fill="none" stroke="#4d86f6" stroke-width="2.2" stroke-linejoin="round"/></svg>
<div class="t" style="left:528.3px;top:711.0px;font-size:11px;color:#000;font-weight:700;">请求数</div>
<div class="t" style="left:528.5px;top:728.1px;font-size:11px;color:#006eff;font-weight:500;">查看详情</div>
<div class="t" style="left:567px;top:710.2px;font-size:11px;color:#bbb">(次)</div>
<div class="b" style="left:520px;top:439px;width:1116px;height:1px;background:#e5e5e5"></div>
<div class="b" style="left:520px;top:570px;width:1116px;height:1px;background:#e5e5e5"></div>
<div class="b" style="left:448px;top:702px;width:1188px;height:1px;background:#e5e5e5"></div>
<div class="b" style="left:448px;top:833px;width:1188px;height:1px;background:#e5e5e5"></div>
<div class="t" style="left:456.3px;top:315.8px;font-size:11px;color:#000;font-weight:700;">用量</div>
<div class="t" style="left:456.4px;top:710.1px;font-size:11px;color:#000;font-weight:700;">请求数</div>
<div class="t" style="left:456.4px;top:842.0px;font-size:11px;color:#000;font-weight:700;">状态码</div>
<div class="t" style="left:456.4px;top:858.7px;font-size:11px;color:#006eff;font-weight:500;">状态码说明</div>
<div class="t" style="left:528.3px;top:843.0px;font-size:11px;color:#000;font-weight:700;">状态码占比</div>
<div class="t" style="left:588.9px;top:842.7px;font-size:11.5px;color:#bbb;font-weight:500;">(%)</div>
<div class="t" style="left:528.5px;top:859.6px;font-size:11px;color:#006eff;font-weight:500;">查看详情</div>
<svg class="b" style="left:1590px;top:323px" width="16" height="16" viewBox="0 0 16 16"><rect x="6.2" y="1" width="2.5" height="5.4" fill="#808080"/><path d="M4.8 6 L10.2 6 L7.45 9.1 Z" fill="#808080"/><rect x="3" y="10.6" width="9.1" height="1.6" fill="#808080"/></svg>
<svg class="b" style="left:1590px;top:717px" width="16" height="16" viewBox="0 0 16 16"><rect x="6.2" y="1" width="2.5" height="5.4" fill="#808080"/><path d="M4.8 6 L10.2 6 L7.45 9.1 Z" fill="#808080"/><rect x="3" y="10.6" width="9.1" height="1.6" fill="#808080"/></svg>
<svg class="b" style="left:1590px;top:849px" width="16" height="16" viewBox="0 0 16 16"><rect x="6.2" y="1" width="2.5" height="5.4" fill="#808080"/><path d="M4.8 6 L10.2 6 L7.45 9.1 Z" fill="#808080"/><rect x="3" y="10.6" width="9.1" height="1.6" fill="#808080"/></svg>
<svg class="b" style="left:1035px;top:850px" width="140" height="140" viewBox="1035 850 140 140"><circle cx="1105" cy="920" r="51.6" fill="none" stroke="#f5c753" stroke-width="16"/></svg>
<svg class="b" style="left:870px;top:1000px" width="400" height="25" viewBox="870 1000 400 25"><defs><clipPath id="lc"><rect x="870" y="1000" width="400" height="20"/></clipPath></defs><g clip-path="url(#lc)"><circle cx="885.6" cy="1015.3" r="5.5" fill="#f5c753"/><circle cx="976.7" cy="1015.3" r="5.5" fill="#6fd092"/><circle cx="1067.8" cy="1015.3" r="5.5" fill="#2a6df6"/><circle cx="1158.9" cy="1015.3" r="5.5" fill="#e8605a"/><circle cx="1250.0" cy="1015.3" r="5.5" fill="#8a4bd8"/></g></svg>
<div class="t" style="left:899.3px;top:1000.0px;font-size:11px;color:#222;font-weight:500;">4xx</div>
<div class="t" style="left:990.4px;top:1000.0px;font-size:11px;color:#222;font-weight:500;">2xx</div>
<div class="t" style="left:1081.5px;top:1000.0px;font-size:11px;color:#222;font-weight:500;">3xx</div>
<div class="t" style="left:1172.6px;top:1000.0px;font-size:11px;color:#222;font-weight:500;">5xx</div>
<div class="t" style="left:1263.7px;top:1000.8px;font-size:11px;color:#222;font-weight:500;">其他状态码</div>
</body></html>
